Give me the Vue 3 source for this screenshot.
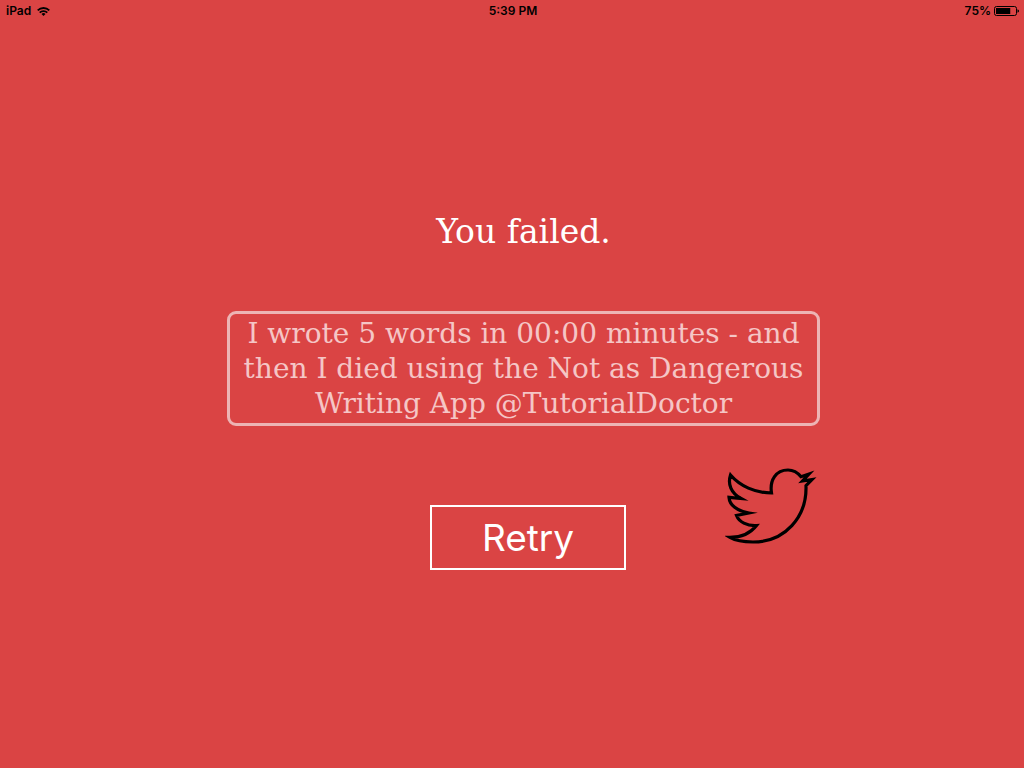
<script setup>
import { ref } from 'vue'

const message = ref(
  'I wrote 5 words in 00:00 minutes - and then I died using the Not as Dangerous Writing App @TutorialDoctor'
)
const battery = 75
</script>

<template>
  <div class="screen">
    <header class="status">
      <div class="carrier">
        <span>iPad</span>
        <svg class="wifi" viewBox="0 0 13 9" aria-hidden="true">
          <path d="M0.7 3.4a8.2 8.2 0 0 1 11.6 0" />
          <path d="M2.7 5.6a5.4 5.4 0 0 1 7.6 0" />
          <path class="dot" d="M4.5 7a2.9 2.9 0 0 1 4 0L6.5 9z" />
        </svg>
      </div>
      <div class="time">5:39 PM</div>
      <div class="power">
        <span>{{ battery }}%</span>
        <svg class="battery" viewBox="0 0 26 10" aria-hidden="true">
          <rect class="case" x="0.5" y="0.5" width="22" height="9" rx="2" />
          <rect x="2" y="2" :width="(19 * battery) / 100" height="6" />
          <path d="M23.5 3.2q1.6 0.6 1.6 1.8t-1.6 1.8z" />
        </svg>
      </div>
    </header>

    <main class="panel">
      <h1>You failed.</h1>
      <textarea v-model="message" class="message" rows="3" aria-label="Message to share"></textarea>
      <div class="actions">
        <button class="retry" type="button">Retry</button>
        <button class="share" type="button" aria-label="Share on Twitter">
          <svg viewBox="10 8 92 77" aria-hidden="true">
            <path
              d="M15.5 15C25 26 40 33 56.5 33C54.5 20 61 10 73 10C79 10 83 13 86 16.7L94 14L87.5 21L97 19.5L91 25.7C92 57 70 82 38 82C29 82 21 81 15 77.4C27 77.4 36 72.5 41.5 65.5C32 66 24 62 21.5 55.5L34 53C22 51 14.5 45 14 37.3L26 38.5C16 33 12.5 24 15.5 15Z"
            />
          </svg>
        </button>
      </div>
    </main>
  </div>
</template>

<style>
body {
  margin: 0;
  background: #da4444;
}
</style>

<style scoped>
.screen {
  min-height: 100vh;
  box-sizing: border-box;
  background: #da4444;
  color: #fff;
}

.status {
  display: grid;
  grid-template-columns: 1fr auto 1fr;
  align-items: center;
  height: 22px;
  padding: 0 4px 0 6px;
  color: #000;
  font: 600 12px/22px Inter, Roboto, sans-serif;
}

.carrier,
.power {
  display: flex;
  align-items: center;
  gap: 6px;
}

.power {
  justify-content: flex-end;
  gap: 3px;
}

.wifi {
  width: 13px;
  height: 9px;
  fill: none;
  stroke: #000;
  stroke-width: 1.8;
}

.wifi .dot {
  fill: #000;
  stroke: none;
}

.battery {
  width: 26px;
  height: 10px;
}

.battery .case {
  fill: none;
  stroke: #000;
}

.panel {
  display: flex;
  flex-direction: column;
  align-items: center;
  padding: 188px 0 24px 23px;
}

h1 {
  margin: 0;
  font: 400 33px/44px "DejaVu Serif", serif;
}

.message {
  display: block;
  box-sizing: border-box;
  width: 100%;
  max-width: 593px;
  margin: 57px 0 0;
  padding: 2px 4px;
  border: 3px solid #edb4b4;
  border-radius: 9px;
  outline: 0;
  resize: none;
  overflow: hidden;
  background: transparent;
  color: #f5c6c6;
  text-align: center;
  font: 400 28px/35px "DejaVu Serif", serif;
}

.actions {
  display: grid;
  grid-template-columns: 1fr auto 1fr;
  box-sizing: border-box;
  width: 100%;
  max-width: 593px;
  margin-top: 42px;
  padding: 0 3px 0 12px;
}

.retry {
  grid-column: 2;
  align-self: end;
  box-sizing: border-box;
  width: 196px;
  height: 65px;
  margin: 37px 0 0;
  padding: 0;
  border: 2px solid #fff;
  background: transparent;
  color: #fff;
  font: 400 37px/60px Inter, Roboto, sans-serif;
}

.share {
  justify-self: end;
  align-self: start;
  width: 92px;
  height: 77px;
  padding: 0;
  border: 0;
  background: transparent;
}

.share svg {
  display: block;
  width: 92px;
  height: 77px;
  fill: none;
  stroke: #000;
  stroke-width: 3.2;
  stroke-miterlimit: 8;
}
</style>
